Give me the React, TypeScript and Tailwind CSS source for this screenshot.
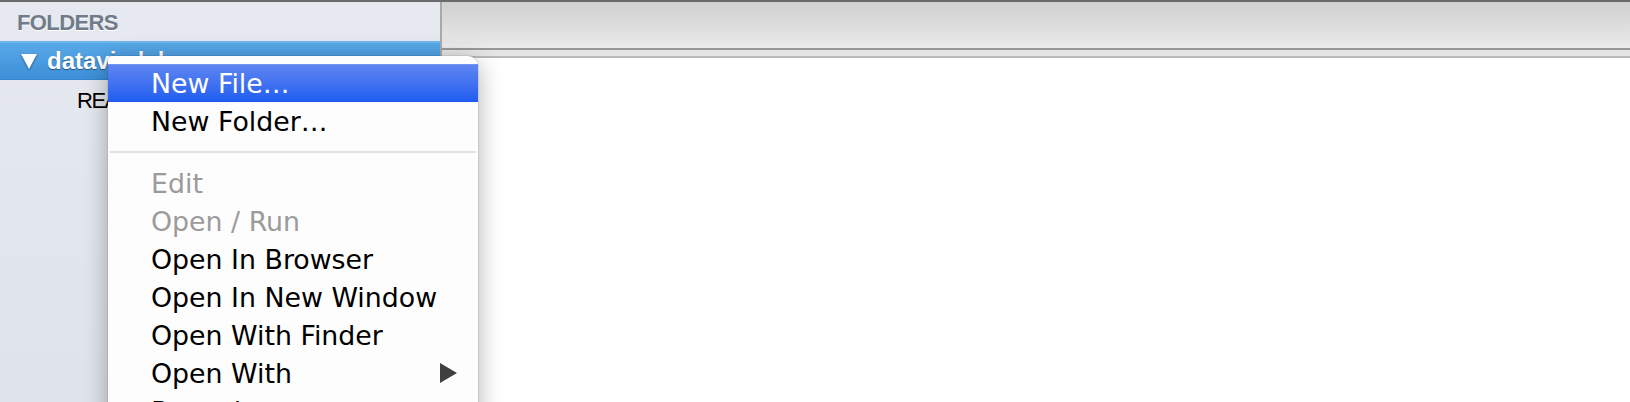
import React from "react";

type Item =
  | { kind: "item"; label: string; disabled?: boolean; active?: boolean; submenu?: boolean }
  | { kind: "sep" };

const items: Item[] = [
  { kind: "item", label: "New File…", active: true },
  { kind: "item", label: "New Folder…" },
  { kind: "sep" },
  { kind: "item", label: "Edit", disabled: true },
  { kind: "item", label: "Open / Run", disabled: true },
  { kind: "item", label: "Open In Browser" },
  { kind: "item", label: "Open In New Window" },
  { kind: "item", label: "Open With Finder" },
  { kind: "item", label: "Open With", submenu: true },
  { kind: "item", label: "Reveal" },
];

function ContextMenu() {
  return (
    <div className="absolute left-[108px] top-[56px] w-[370px] rounded-tl-[4px] rounded-tr-[10px] bg-[#fdfdfd] pt-[8px] pb-[8px] shadow-[0_0_0_1px_rgba(0,0,0,0.07),0_6px_24px_rgba(0,0,0,0.32)] font-['DejaVu_Sans',sans-serif] text-[26.8px]">
      {items.map((it, i) =>
        it.kind === "sep" ? (
          <div key={i} className="flex h-[24px] items-center px-[2px]">
            <div className="h-[2px] w-full bg-[#e2e2e2]" />
          </div>
        ) : (
          <div
            key={i}
            className={
              it.active
                ? "flex h-[38px] items-center justify-between border-t border-[#7096f4] bg-linear-to-b from-[#5f85f1] to-[#1e5cf0] pl-[43px] pr-[21px] text-white"
                : it.disabled
                ? "flex h-[38px] items-center justify-between pl-[43px] pr-[21px] text-[#9b9b9b]"
                : "flex h-[38px] items-center justify-between pl-[43px] pr-[21px] text-black"
            }
          >
            <span className="leading-none whitespace-nowrap pt-[2px]">{it.label}</span>
            {it.submenu && (
              <svg width="17" height="20" viewBox="0 0 17 20">
                <polygon points="0,0 17,10 0,20" fill="#404040" />
              </svg>
            )}
          </div>
        )
      )}
    </div>
  );
}

export default function App() {
  return (
    <div className="relative h-[402px] w-[1630px] overflow-hidden bg-white">
      <div className="h-[2px] bg-[#6a6a6a]" />
      <div className="flex h-[400px]">
        <aside className="w-[442px] shrink-0 border-r-2 border-[#a9a9a9] bg-linear-to-b from-[#e6e9f0] to-[#dfe3ea]">
          <div className="flex h-[39px] items-center pl-[17px] pt-[1px] font-['Liberation_Sans',sans-serif] text-[22px] font-bold tracking-[-0.6px] text-[#717b8a] [text-shadow:0_1px_0_#ffffff]">
            FOLDERS
          </div>
          <div className="flex h-[39px] items-center border-t-2 border-b border-t-[#6db6ec] border-b-[#3583cc] bg-linear-to-b from-[#58a9e8] to-[#3c8fd8] pl-[21px]">
            <svg width="16" height="15" viewBox="0 0 16 15" className="drop-shadow-[0_1px_1px_rgba(0,0,0,0.45)]">
              <polygon points="0,0 16,0 8,15" fill="#ffffff" />
            </svg>
            <span className="ml-[10px] font-['Liberation_Sans',sans-serif] text-[24px] font-bold leading-none text-white [text-shadow:0_1px_1px_rgba(0,0,0,0.45)]">
              datavis-lab
            </span>
          </div>
          <div className="flex h-[40px] items-center pl-[77px] font-['Liberation_Sans',sans-serif] text-[22px] tracking-[-1.5px] text-black">
            README.md
          </div>
        </aside>
        <main className="flex flex-1 flex-col">
          <div className="h-[42px] bg-linear-to-b from-[#d0d0d0] to-[#e7e7e7]" />
          <div className="h-[4px] bg-[#ebebeb]" />
          <div className="h-[2px] bg-[#979797]" />
          <div className="h-[6px] bg-[#e5e5e5]" />
          <div className="h-[2px] bg-[#b9b9b9]" />
          <div className="flex-1 bg-white" />
        </main>
      </div>
      <ContextMenu />
    </div>
  );
}
